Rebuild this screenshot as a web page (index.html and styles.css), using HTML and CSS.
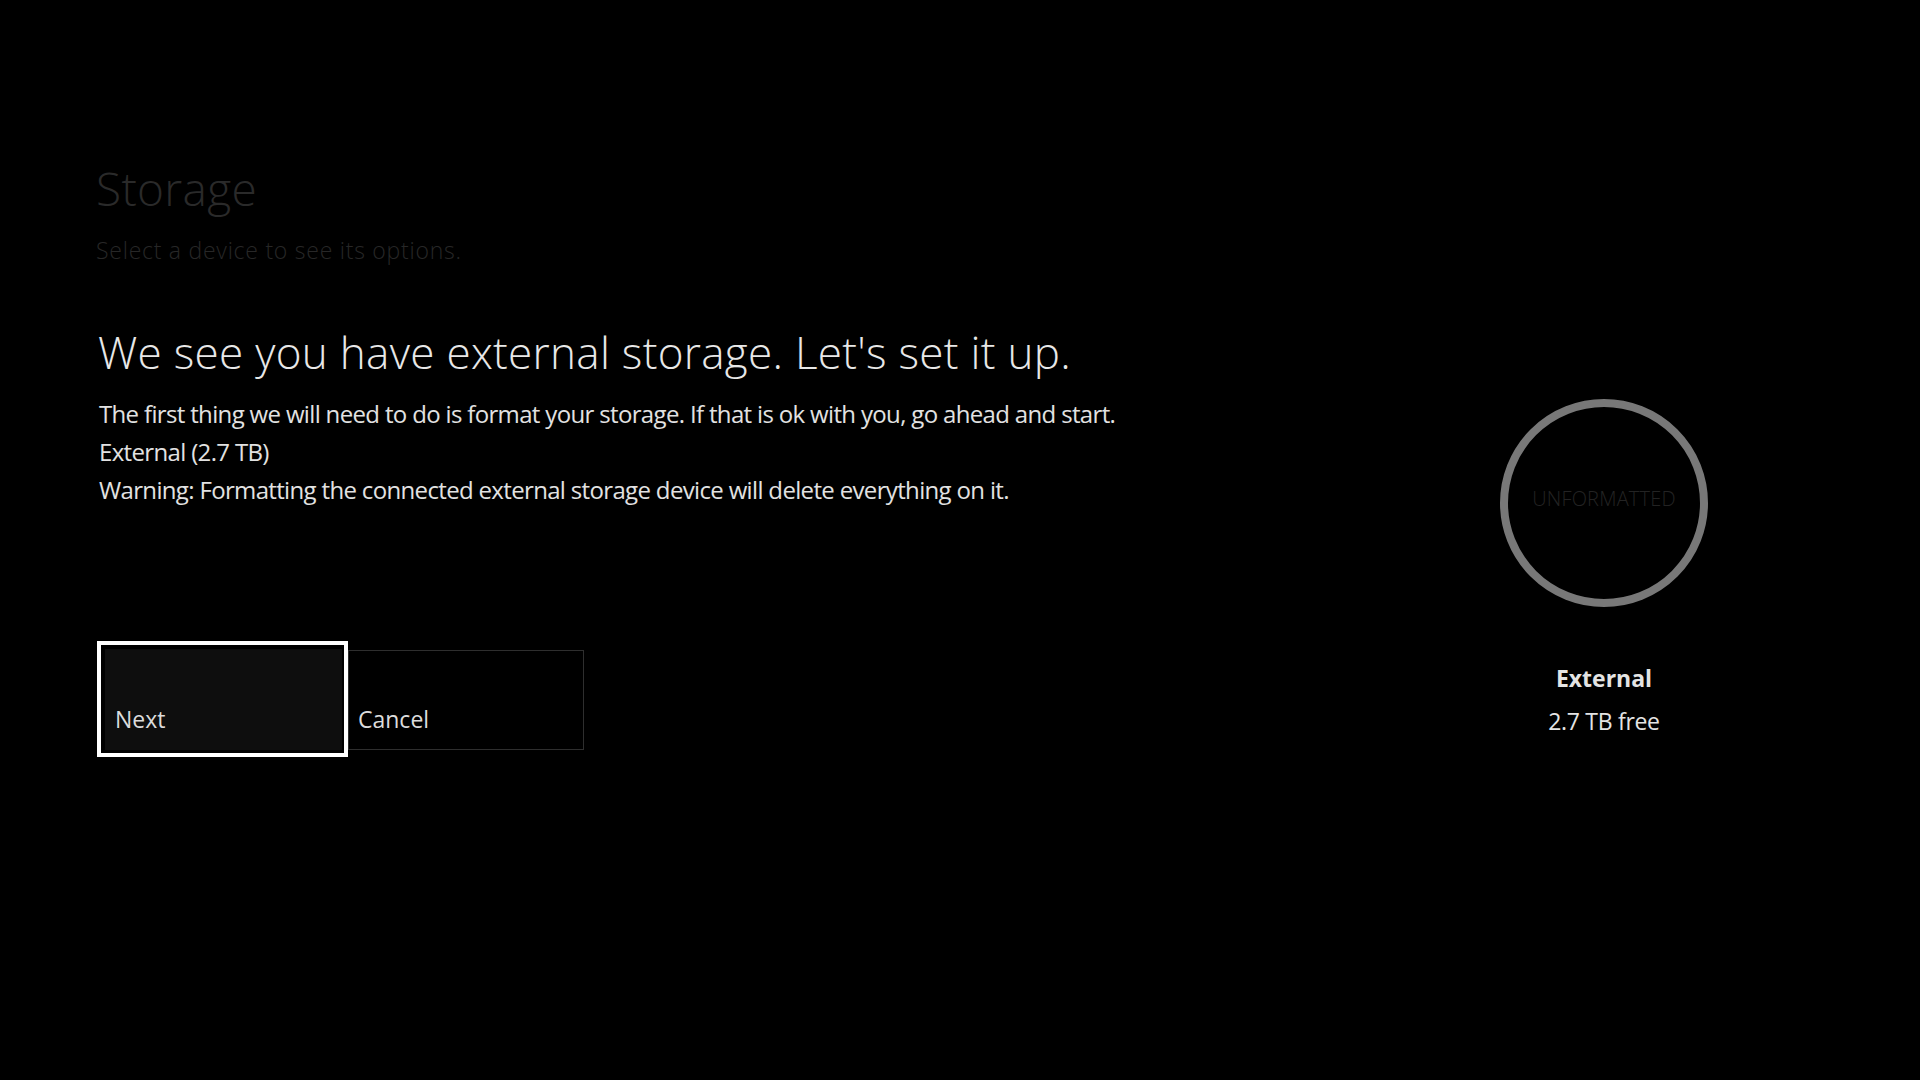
FILE: index.html
```html
<!DOCTYPE html>
<html lang="en">
<head>
<meta charset="utf-8">
<title>Storage</title>
<link rel="stylesheet" href="styles.css">
</head>
<body>
<div class="page">
  <header class="page-header">
    <h1 class="page-title">Storage</h1>
    <p class="page-subtitle">Select a device to see its options.</p>
  </header>
  <div class="content">
    <section class="setup">
      <h2 class="setup-heading">We see you have external storage. Let's set it up.</h2>
      <p class="setup-line">The first thing we will need to do is format your storage. If that is ok with you, go ahead and start.</p>
      <p class="setup-line">External (2.7 TB)</p>
      <p class="setup-line">Warning: Formatting the connected external storage device will delete everything on it.</p>
      <div class="actions">
        <div class="focus-ring">
          <button class="tile tile-primary">Next</button>
        </div>
        <button class="tile tile-secondary">Cancel</button>
      </div>
    </section>
    <aside class="device">
      <div class="device-ring"><span class="device-status">UNFORMATTED</span></div>
      <div class="device-name">External</div>
      <div class="device-free">2.7 TB free</div>
    </aside>
  </div>
</div>
</body>
</html>
```

FILE: styles.css
```css
html, body {
  margin: 0;
  padding: 0;
  background: #000;
}

body {
  width: 1920px;
  height: 1080px;
  overflow: hidden;
  font-family: "Open Sans", "Noto Sans", "Liberation Sans", sans-serif;
  color: #e4e4e4;
}

.page {
  display: flex;
  flex-direction: column;
  padding: 160px 0 0 96px;
}

.page-title {
  margin: 0;
  font-size: 46px;
  line-height: 56px;
  font-weight: 300;
  color: #2a2a2a;
  letter-spacing: 0.3px;
}

.page-subtitle {
  margin: 19px 0 0;
  font-size: 23px;
  line-height: 30px;
  font-weight: 300;
  color: #272727;
  letter-spacing: 0.75px;
}

.content {
  display: flex;
  margin-top: 60px;
}

.setup {
  flex: 1;
  display: flex;
  flex-direction: column;
}

.setup-heading {
  margin: 0 0 16px 2px;
  font-size: 44px;
  line-height: 54px;
  font-weight: 300;
  color: #e8e8e8;
  letter-spacing: 0.3px;
}

.setup-line {
  margin: 0 0 0 3px;
  font-size: 24px;
  line-height: 38px;
  font-weight: 400;
  color: #e2e2e2;
  letter-spacing: -0.66px;
}

.actions {
  display: flex;
  align-items: flex-start;
  margin-top: 132px;
}

.focus-ring {
  margin-left: 1px;
  border: 4px solid #fff;
  padding: 4px 2px 3px 4px;
}

.tile {
  display: flex;
  align-items: flex-end;
  box-sizing: border-box;
  width: 237px;
  height: 101px;
  padding: 0 0 15px 10px;
  margin: 0;
  font-family: inherit;
  font-size: 23px;
  line-height: 32px;
  color: #dcdcdc;
  text-align: left;
  cursor: pointer;
}

.tile-primary {
  background: #0e0e0e;
  border: 0;
}

.tile-secondary {
  margin-top: 9px;
  width: 236px;
  height: 100px;
  background: #000;
  border: 1px solid #2e2e2e;
  padding-left: 9px;
  padding-bottom: 14px;
}

.device {
  width: 300px;
  margin-right: 166px;
  padding-top: 74px;
  display: flex;
  flex-direction: column;
  align-items: center;
}

.device-ring {
  box-sizing: border-box;
  width: 208px;
  height: 208px;
  border: 8px solid #787878;
  border-radius: 50%;
  display: flex;
  align-items: center;
  justify-content: center;
  margin-bottom: 51px;
}

.device-status {
  font-size: 20px;
  font-weight: 300;
  color: #232323;
  margin-top: -10px;
  letter-spacing: 0.2px;
}

.device-name {
  font-size: 23px;
  line-height: 40px;
  font-weight: 700;
  color: #e4e4e4;
}

.device-free {
  margin-top: 3px;
  font-size: 23px;
  line-height: 40px;
  font-weight: 400;
  color: #e4e4e4;
  letter-spacing: -0.3px;
}
```
